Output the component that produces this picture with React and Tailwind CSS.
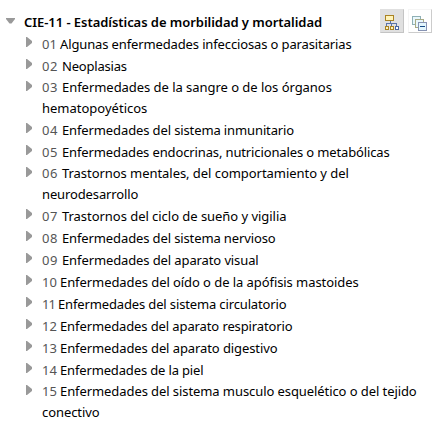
const chapters = [
  { code: '01', codeStyle: 'w-[18px]', lines: ['Algunas enfermedades infecciosas o parasitarias'], tracking: ['tracking-[-0.13px]'] },
  { code: '02', codeStyle: 'w-5 tracking-[0.6px]', lines: ['Neoplasias'], tracking: ['tracking-[-0.2px]'] },
  { code: '03', codeStyle: 'w-5 tracking-[0.6px]', lines: ['Enfermedades de la sangre o de los órganos', 'hematopoyéticos'], tracking: ['tracking-[-0.04px]', 'tracking-[0px]'] },
  { code: '04', codeStyle: 'w-5 tracking-[0.6px]', lines: ['Enfermedades del sistema inmunitario'], tracking: ['tracking-[-0.12px]'] },
  { code: '05', codeStyle: 'w-5 tracking-[0.6px]', lines: ['Enfermedades endocrinas, nutricionales o metabólicas'], tracking: ['tracking-[-0.13px]'] },
  { code: '06', codeStyle: 'w-5 tracking-[0.6px]', lines: ['Trastornos mentales, del comportamiento y del', 'neurodesarrollo'], tracking: ['tracking-[-0.05px]', 'tracking-[-0.13px]'] },
  { code: '07', codeStyle: 'w-5 tracking-[0.6px]', lines: ['Trastornos del ciclo de sueño y vigilia'], tracking: ['tracking-[-0.04px]'] },
  { code: '08', codeStyle: 'w-5 tracking-[0.6px]', lines: ['Enfermedades del sistema nervioso'], tracking: ['tracking-[-0.12px]'] },
  { code: '09', codeStyle: 'w-5 tracking-[0.6px]', lines: ['Enfermedades del aparato visual'], tracking: ['tracking-[-0.11px]'] },
  { code: '10', codeStyle: 'w-[18px]', lines: ['Enfermedades del oído o de la apófisis mastoides'], tracking: ['tracking-[-0.07px]'] },
  { code: '11', codeStyle: 'w-4 tracking-[-1px]', lines: ['Enfermedades del sistema circulatorio'], tracking: ['tracking-[-0.14px]'] },
  { code: '12', codeStyle: 'w-[18px]', lines: ['Enfermedades del aparato respiratorio'], tracking: ['tracking-[-0.11px]'] },
  { code: '13', codeStyle: 'w-[18px]', lines: ['Enfermedades del aparato digestivo'], tracking: ['tracking-[-0.09px]'] },
  { code: '14', codeStyle: 'w-[18px]', lines: ['Enfermedades de la piel'], tracking: ['tracking-[-0.15px]'] },
  { code: '15', codeStyle: 'w-[18px]', lines: ['Enfermedades del sistema musculo esquelético o del tejido', 'conectivo'], tracking: ['tracking-[-0.08px]', 'tracking-[-0.08px]'] },
];

function HierarchyIcon() {
  return (
    <svg width="16" height="16" viewBox="0 0 16 16" shapeRendering="crispEdges" fill="none">
      <path d="M6.5 6v3M2.5 11V8.5h10V11M7.5 8.5V11" stroke="#5b74a8" />
      <rect x="1.5" y="0.5" width="8" height="5" fill="#fff3b8" stroke="#a98222" />
      <rect x="1.5" y="11.5" width="3" height="3" fill="#fff3b8" stroke="#a98222" />
      <rect x="6.5" y="11.5" width="3" height="3" fill="#fff3b8" stroke="#a98222" />
      <rect x="11.5" y="11.5" width="3" height="3" fill="#fff" stroke="#4a669f" />
    </svg>
  );
}

function CollapseIcon() {
  return (
    <svg width="16" height="16" viewBox="0 0 16 16" shapeRendering="crispEdges">
      <rect x="0.5" y="1.5" width="8" height="8" fill="#e9f7fc" stroke="#8fb0b5" />
      <rect x="3.5" y="4.5" width="8" height="8" fill="#e9f7fc" stroke="#a8ab85" />
      <rect x="6.5" y="7.5" width="8" height="8" fill="#e2f6fd" stroke="#8793b3" />
      <path d="M8 11.5h5" stroke="#174a86" />
    </svg>
  );
}

export default function App() {
  return (
    <main className="h-[423px] w-[441px] overflow-hidden bg-white font-['Noto_Sans',sans-serif] text-[13px] text-black">
      <header className="flex h-[33px] items-start pl-[6px] pr-[9px] pt-[9px]">
        <svg className="mt-[9px] shrink-0" width="9" height="6" viewBox="0 0 9 6"><path d="M0 0h9v1L5.5 5.5h-2L0 1z" fill="#999" /></svg>
        <h1 className="ml-[9px] h-6 grow whitespace-nowrap font-semibold leading-[26px] tracking-[-0.05px]">CIE-11 - Estadísticas de morbilidad y mortalidad</h1>
        <div className="flex gap-1">
          <button className="h-6 w-6 border border-[#e0e0e0] border-b-[#c4c4c4] border-r-[#c4c4c4] bg-[#e0e0e0] pl-[3px] pt-[3px]"><HierarchyIcon /></button>
          <button className="h-6 w-6 border border-[#f5f5f5] border-b-[#ccc] border-r-[#ccc] bg-white pl-[3px] pt-[3px]"><CollapseIcon /></button>
        </div>
      </header>
      <ul className="pl-[26px]">
        {chapters.map((c) => (
          <li key={c.code} className="flex items-start">
            <svg className="mt-1 shrink-0" width="6" height="10" viewBox="0 0 6 10"><path d="M0 0h1l5 4v2l-5 4H0z" fill="#999" /></svg>
            <div className={c.lines.length > 1 ? 'ml-[10px] whitespace-nowrap leading-[21px]' : 'ml-[10px] whitespace-nowrap leading-[22px]'}>
              {c.lines.map((line, i) => (
                <div key={line} className={i === 0 ? 'flex' : ''}>
                  {i === 0 && <span className={`${c.codeStyle} shrink-0 text-[#555]`}>{c.code} </span>}
                  <span className={c.tracking[i]}>{line}</span>
                </div>
              ))}
            </div>
          </li>
        ))}
      </ul>
    </main>
  );
}
